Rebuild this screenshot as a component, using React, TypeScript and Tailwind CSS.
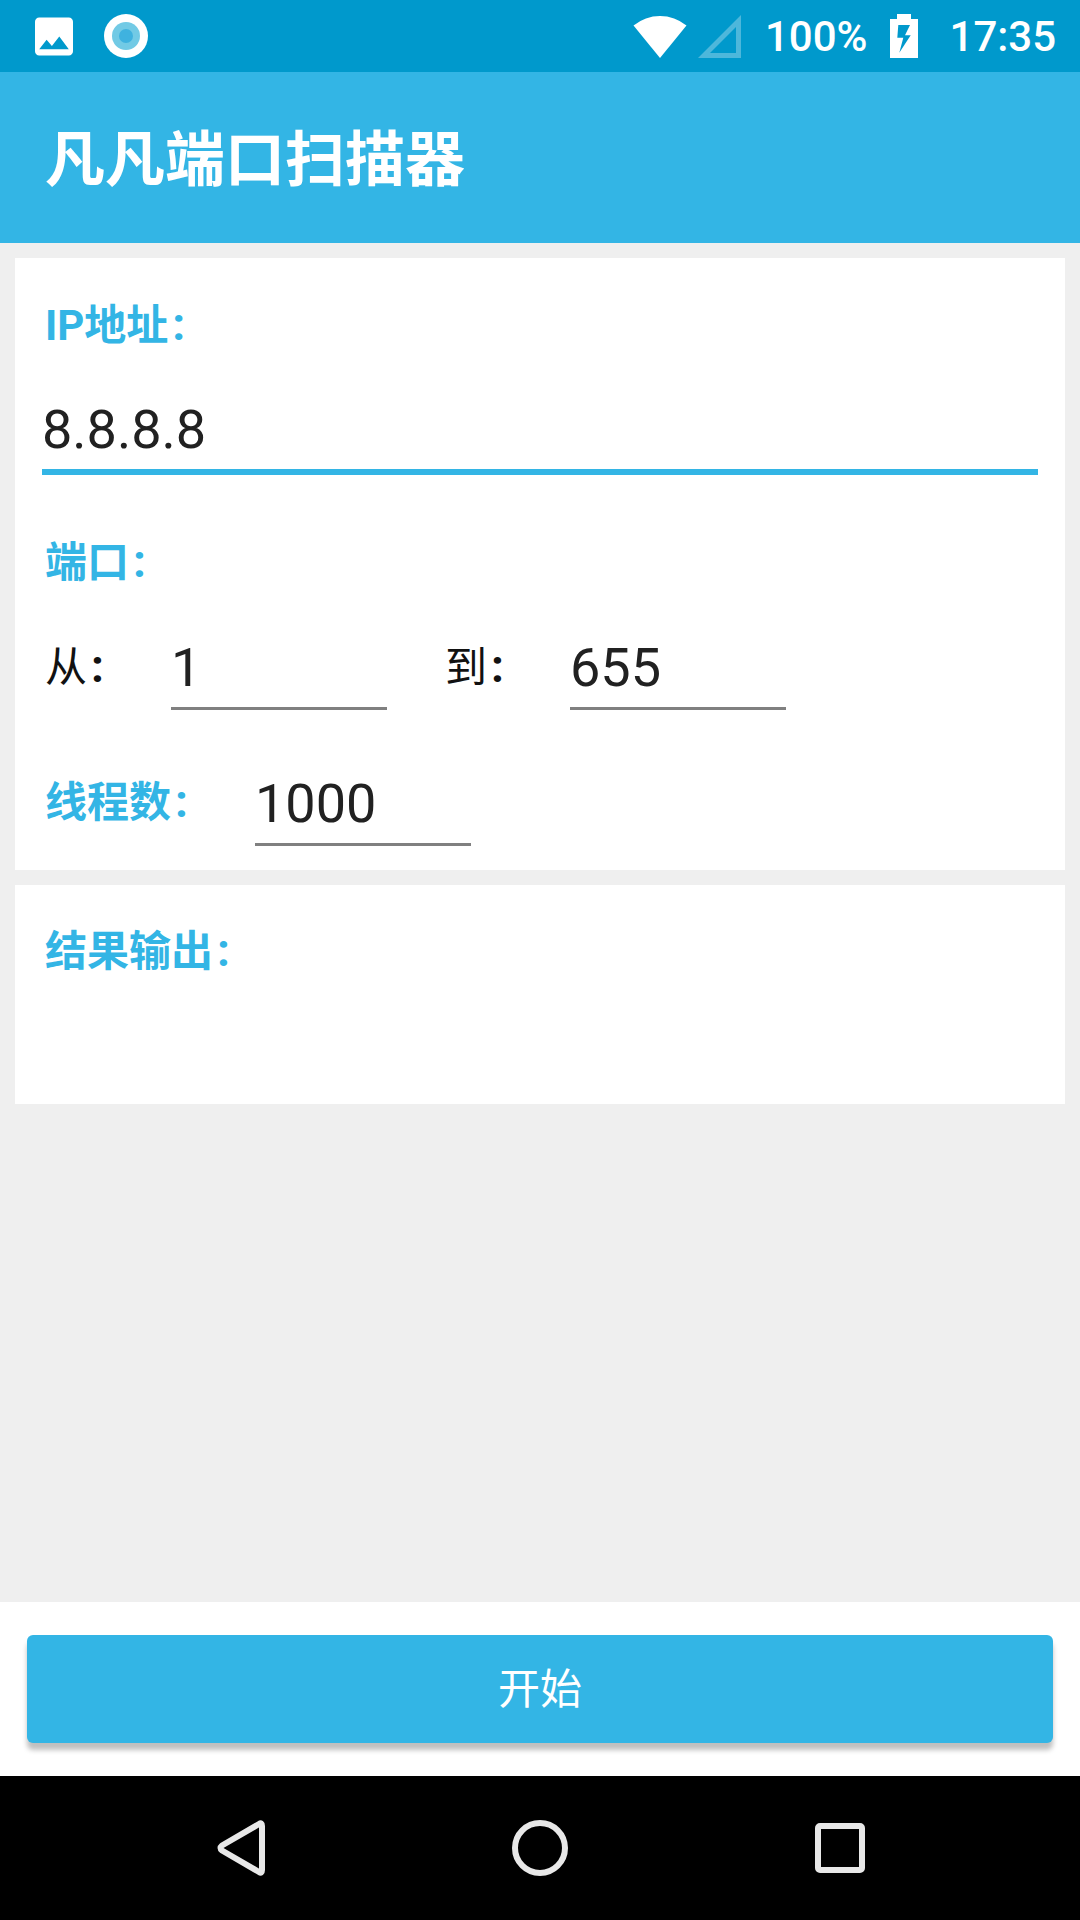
import React from 'react';

const font = "font-['Roboto','Noto_Sans_CJK_SC',sans-serif]";

function Colon() {
  return <span className="ml-[4px] text-[46px] font-bold">:</span>;
}

function Field({ value, className }: { value?: string; className: string }) {
  return (
    <div className={`h-[80px] box-border border-b-[3px] border-[#808080] pt-[6px] text-[54px] leading-[64px] text-[#212121] ${className}`}>
      {value}
    </div>
  );
}

function Label({ children, className = '' }: { children: React.ReactNode; className?: string }) {
  return <div className={`h-[56px] text-[42px] leading-[56px] font-bold text-[#33B5E5] ${className}`}>{children}<Colon /></div>;
}

function StatusBar() {
  return (
    <div className="h-[72px] shrink-0 bg-[#0099CC] flex items-center text-white pl-[35px]">
      <svg width="38" height="39" viewBox="3 3 18 18" fill="#fff">
        <path d="M21 19V5c0-1.1-.9-2-2-2H5c-1.1 0-2 .9-2 2v14c0 1.1.9 2 2 2h14c1.1 0 2-.9 2-2zM8.5 13.5l2.5 3.01L14.5 12l4.5 6H5l3.5-4.5z" />
      </svg>
      <svg className="ml-[31px]" width="44" height="44" viewBox="0 0 44 44">
        <circle cx="22" cy="22" r="22" fill="#fff" />
        <circle cx="22" cy="22" r="14" fill="#72CAE5" />
        <circle cx="22" cy="22" r="7" fill="#3FB2DF" />
      </svg>
      <svg className="ml-[485px]" width="54" height="43" viewBox="0 0 54 43" fill="#fff">
        <path d="M0.5 10.5A42 42 0 0 1 53.5 10.5L27 43Z" />
      </svg>
      <svg className="ml-[11px]" width="44" height="43" viewBox="0 0 44 43" fill="#fff" fillOpacity="0.3">
        <path fillRule="evenodd" d="M43 0V43H0ZM38 12L12 38H38Z" />
      </svg>
      <span className="ml-[23px] mt-[2px] text-[42px] leading-[50px] font-medium">100%</span>
      <svg className="ml-[22px]" width="28" height="44" viewBox="0 0 28 44" fill="#fff">
        <path fillRule="evenodd" d="M7 0H21V5H28V44H0V5H7ZM8.3 11L7.3 23.7H13.3L9.3 38.7L20.7 21.3H15L20 11Z" />
      </svg>
      <span className="ml-[32px] mt-[2px] text-[42px] leading-[50px] font-medium">17:35</span>
    </div>
  );
}

function NavBar() {
  return (
    <div className="h-[144px] shrink-0 bg-black flex items-center pl-[217px]">
      <svg width="48" height="56" viewBox="0 0 48 56" fill="none" stroke="#E8E8E8" strokeWidth="6" strokeLinejoin="round">
        <path d="M45 6V50Q45 54 42 52L5 30.5Q2 28 5 25.5L42 4Q45 2 45 6Z" />
      </svg>
      <svg className="ml-[247px]" width="56" height="56" viewBox="0 0 56 56" fill="none" stroke="#E8E8E8" strokeWidth="6">
        <circle cx="28" cy="28" r="25" />
      </svg>
      <svg className="ml-[247px]" width="50" height="50" viewBox="0 0 50 50" fill="none" stroke="#E8E8E8" strokeWidth="6" strokeLinejoin="round">
        <rect x="3" y="3" width="44" height="44" rx="2" />
      </svg>
    </div>
  );
}

export default function App() {
  return (
    <div className={`w-[1080px] h-[1920px] flex flex-col bg-[#EFEFEF] overflow-hidden ${font}`}>
      <StatusBar />
      <div className="h-[171px] shrink-0 bg-[#33B5E5] flex items-center pl-[45px] pt-[6px] text-[60px] font-bold text-white">
        凡凡端口扫描器
      </div>

      <div className="flex-1 flex flex-col px-[15px] pt-[15px] gap-[15px]">
        <div className="h-[612px] bg-white flex flex-col pt-[38px]">
          <Label className="ml-[30px]">IP地址</Label>
          <div className="ml-[27px] w-[996px] mt-[35px] h-[88px] box-border border-b-[6px] border-[#33B5E5] pt-[5px] text-[54px] leading-[76px] text-[#212121]">
            8.8.8.8
          </div>
          <Label className="ml-[30px] mt-[58px]">端口</Label>
          <div className="flex ml-[30px] mt-[41px] text-[42px] leading-[56px] text-[#111111]">
            <div className="w-[126px] pt-[8px]">从<Colon /></div>
            <Field value="1" className="w-[216px]" />
            <div className="w-[125px] ml-[58px] pt-[8px]">到<Colon /></div>
            <Field value="655" className="w-[216px]" />
          </div>
          <div className="flex ml-[30px] mt-[56px]">
            <Label className="w-[210px] mt-[7px]">线程数</Label>
            <Field value="1000" className="w-[216px]" />
          </div>
        </div>

        <div className="h-[219px] bg-white pt-[37px] pl-[30px]">
          <Label>结果输出</Label>
        </div>
      </div>

      <div className="h-[174px] shrink-0 bg-white px-[27px] pt-[33px]">
        <div className="h-[108px] rounded-[6px] bg-[#33B5E5] flex items-center justify-center text-[42px] text-white shadow-[0_7px_5px_rgba(0,0,0,0.25)]">
          开始
        </div>
      </div>
      <NavBar />
    </div>
  );
}
